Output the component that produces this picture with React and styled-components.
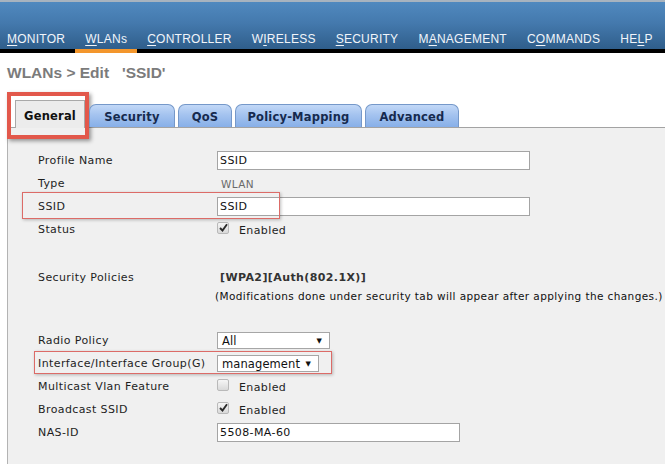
import styled, { createGlobalStyle } from "styled-components"

const Global = createGlobalStyle`
  html, body {
    margin: 0;
    padding: 0;
    background: #ffffff;
  }
  #root {
    width: 665px;
    height: 464px;
    overflow: hidden;
  }
`

const Page = styled.div`
  display: flex;
  flex-direction: column;
  width: 665px;
  height: 464px;
  overflow: hidden;
  background: #ffffff;
`

const TopBar = styled.div`
  height: 47px;
  border-top: 2px solid #a7b3bf;
  background: linear-gradient(#5089bf 0%, #4479ad 45%, #2f5e8b 100%);
  border-bottom: 4px solid #000000;
  display: flex;
  align-items: flex-end;
`

const Nav = styled.nav`
  display: flex;
  margin-left: -3px;
  margin-bottom: -4px;
`

const NavItem = styled.div`
  font-family: "Liberation Sans", Arial, sans-serif;
  font-size: 12px;
  letter-spacing: 0.25px;
  color: #f1f5fa;
  padding: 0 10px 3px;
  border-bottom: 4px solid ${(p) => (p.$active ? "#f3962c" : "transparent")};
  white-space: nowrap;

  u {
    text-decoration: underline;
    text-underline-offset: 2px;
  }
`

const TitleArea = styled.div`
  height: 47px;
  padding: 11px 0 0 7px;
  box-sizing: border-box;
`

const Title = styled.h1`
  margin: 0;
  font-family: "Liberation Sans", Arial, sans-serif;
  font-size: 15.5px;
  font-weight: bold;
  color: #7b7b7b;
  white-space: pre;
`

const TabBar = styled.div`
  height: 27px;
  display: flex;
  align-items: flex-end;
  gap: 3px;
  padding-left: 15px;
  position: relative;
  z-index: 2;
`

const Tab = styled.div`
  position: relative;
  box-sizing: border-box;
  width: ${(p) => p.$w}px;
  height: ${(p) => (p.$active ? 28 : 23)}px;
  margin-bottom: ${(p) => (p.$active ? -1 : 0)}px;
  margin-right: ${(p) => (p.$active ? 1 : 0)}px;
  display: flex;
  align-items: center;
  justify-content: center;
  padding-top: ${(p) => (p.$active ? 3 : 1)}px;
  font-family: "DejaVu Sans", Verdana, sans-serif;
  font-size: 11.5px;
  font-weight: bold;
  letter-spacing: 0.2px;
  color: ${(p) => (p.$active ? "#111111" : "#162a4e")};
  background: ${(p) =>
    p.$active ? "#ececec" : "linear-gradient(#c2d8f7 0%, #a4c3ef 45%, #87afe8 100%)"};
  border: 1px solid ${(p) => (p.$active ? "#a9a9a9" : "#7598c9")};
  border-bottom: none;
  border-radius: ${(p) => (p.$active ? "0" : "7px 7px 0 0")};
`

const TabMark = styled.div`
  position: absolute;
  left: -9px;
  top: -9px;
  width: 82px;
  height: 47px;
  box-sizing: border-box;
  border: 4px solid #e2584b;
  box-shadow: 2px 2px 4px rgba(0, 0, 0, 0.4);
  pointer-events: none;
`

const Panel = styled.div`
  flex: 1;
  margin-left: 7px;
  background: #f0f0f0;
  border-left: 1px solid #b3b3b3;
  border-top: 1px solid #a3a3a3;
  padding: 21px 0 0 30px;
  font-family: "DejaVu Sans", Verdana, sans-serif;
  font-size: 11px;
  letter-spacing: 0.4px;
  color: #1e1e1e;
`

const Form = styled.div`
  display: grid;
  grid-template-columns: 179px 1fr;
`

const Row = styled.div`
  grid-column: 1 / 3;
  display: grid;
  grid-template-columns: 179px 1fr;
  align-items: ${(p) => (p.$top ? "start" : "center")};
  height: ${(p) => p.$h || 23}px;
  position: relative;
`

const Spacer = styled.div`
  grid-column: 1 / 3;
  height: ${(p) => p.$h}px;
`

const Label = styled.div`
  white-space: nowrap;
  line-height: 18px;
`

const Field = styled.div`
  display: flex;
  align-items: center;
`

const TextBox = styled.div`
  box-sizing: border-box;
  width: ${(p) => p.$w}px;
  height: 19px;
  background: #ffffff;
  border: 1px solid #a4a4a4;
  padding-left: 2px;
  line-height: 17px;
  color: #111111;
`

const Plain = styled.div`
  padding-left: 4px;
  font-size: 10.5px;
  color: #6a6a6a;
`

const Check = styled.span`
  box-sizing: border-box;
  width: 12px;
  height: 12px;
  margin-top: -4px;
  border: 1px solid #b9b9b9;
  border-radius: 2px;
  background: linear-gradient(#f6f6f6, #d9d9d9);
  display: inline-flex;
  align-items: center;
  justify-content: center;
`

const CheckText = styled.span`
  margin-left: 10px;
  margin-top: 2px;
`

const Policy = styled.div`
  display: flex;
  flex-direction: column;
`

const PolicyValue = styled.div`
  padding-left: 3px;
  line-height: 18px;
  font-weight: bold;
  color: #333333;
`

const PolicyNote = styled.div`
  margin-left: -2px;
  line-height: 18px;
  font-size: 10.5px;
  white-space: nowrap;
  color: #111111;
`

const Select = styled.div`
  box-sizing: border-box;
  width: ${(p) => p.$w}px;
  height: 17px;
  background: #ffffff;
  border: 1px solid #a6a6a6;
  display: flex;
  align-items: center;
  justify-content: space-between;
  padding: 0 7px 0 4px;
  font-size: 11.5px;
  letter-spacing: 0.1px;
  color: #111111;
`

const Arrow = styled.span`
  font-size: 7px;
  color: #111111;
`

const RowMark = styled.div`
  position: absolute;
  left: ${(p) => p.$x}px;
  top: ${(p) => p.$y}px;
  width: ${(p) => p.$w}px;
  height: ${(p) => p.$h}px;
  box-sizing: border-box;
  border: 1.5px solid #dc6b67;
  box-shadow: 1px 1px 3px rgba(0, 0, 0, 0.25);
  pointer-events: none;
`

const Tick = () => (
  <svg width="9" height="9" viewBox="0 0 9 9">
    <path d="M1 5 L3.5 7.5 L8 1.2" fill="none" stroke="#2b2b2b" strokeWidth="1.9" />
  </svg>
)

const Checkbox = ({ checked }) => <Check>{checked && <Tick />}</Check>

const navItems = [
  ["", "M", "ONITOR"],
  ["", "W", "LANs", true],
  ["", "C", "ONTROLLER"],
  ["W", "I", "RELESS"],
  ["", "S", "ECURITY"],
  ["M", "A", "NAGEMENT"],
  ["C", "O", "MMANDS"],
  ["HE", "L", "P"],
]

const tabs = [
  ["General", 70],
  ["Security", 86],
  ["QoS", 54],
  ["Policy-Mapping", 127],
  ["Advanced", 94],
]

export default function App() {
  return (
    <Page>
      <Global />
      <TopBar>
        <Nav>
          {navItems.map(([a, u, b, active]) => (
            <NavItem key={a + u + b} $active={active}>
              {a}
              <u>{u}</u>
              {b}
            </NavItem>
          ))}
        </Nav>
      </TopBar>
      <TitleArea>
        <Title>{"WLANs > Edit   'SSID'"}</Title>
      </TitleArea>
      <TabBar>
        {tabs.map(([name, w], i) => (
          <Tab key={name} $w={w} $active={i === 0}>
            {name}
            {i === 0 && <TabMark />}
          </Tab>
        ))}
      </TabBar>
      <Panel>
        <Form>
          <Row>
            <Label>Profile Name</Label>
            <Field>
              <TextBox $w={313}>SSID</TextBox>
            </Field>
          </Row>
          <Row>
            <Label>Type</Label>
            <Plain>WLAN</Plain>
          </Row>
          <Row>
            <Label>SSID</Label>
            <Field>
              <TextBox $w={313}>SSID</TextBox>
            </Field>
            <RowMark $x={-16} $y={-3} $w={258} $h={27} />
          </Row>
          <Row>
            <Label>Status</Label>
            <Field>
              <Checkbox checked />
              <CheckText>Enabled</CheckText>
            </Field>
          </Row>
          <Spacer $h={28} />
          <Row $top $h={36}>
            <Label>Security Policies</Label>
            <Policy>
              <PolicyValue>[WPA2][Auth(802.1X)]</PolicyValue>
              <PolicyNote>
                (Modifications done under security tab will appear after applying the changes.)
              </PolicyNote>
            </Policy>
          </Row>
          <Spacer $h={24} />
          <Row>
            <Label>Radio Policy</Label>
            <Field>
              <Select $w={113}>
                All <Arrow>▼</Arrow>
              </Select>
            </Field>
          </Row>
          <Row>
            <Label>Interface/Interface Group(G)</Label>
            <Field>
              <Select $w={102}>
                management <Arrow>▼</Arrow>
              </Select>
            </Field>
            <RowMark $x={-4} $y={-1} $w={298} $h={23} />
          </Row>
          <Row>
            <Label>Multicast Vlan Feature</Label>
            <Field>
              <Checkbox />
              <CheckText>Enabled</CheckText>
            </Field>
          </Row>
          <Row>
            <Label>Broadcast SSID</Label>
            <Field>
              <Checkbox checked />
              <CheckText>Enabled</CheckText>
            </Field>
          </Row>
          <Row>
            <Label>NAS-ID</Label>
            <Field>
              <TextBox $w={243}>5508-MA-60</TextBox>
            </Field>
          </Row>
        </Form>
      </Panel>
    </Page>
  )
}
